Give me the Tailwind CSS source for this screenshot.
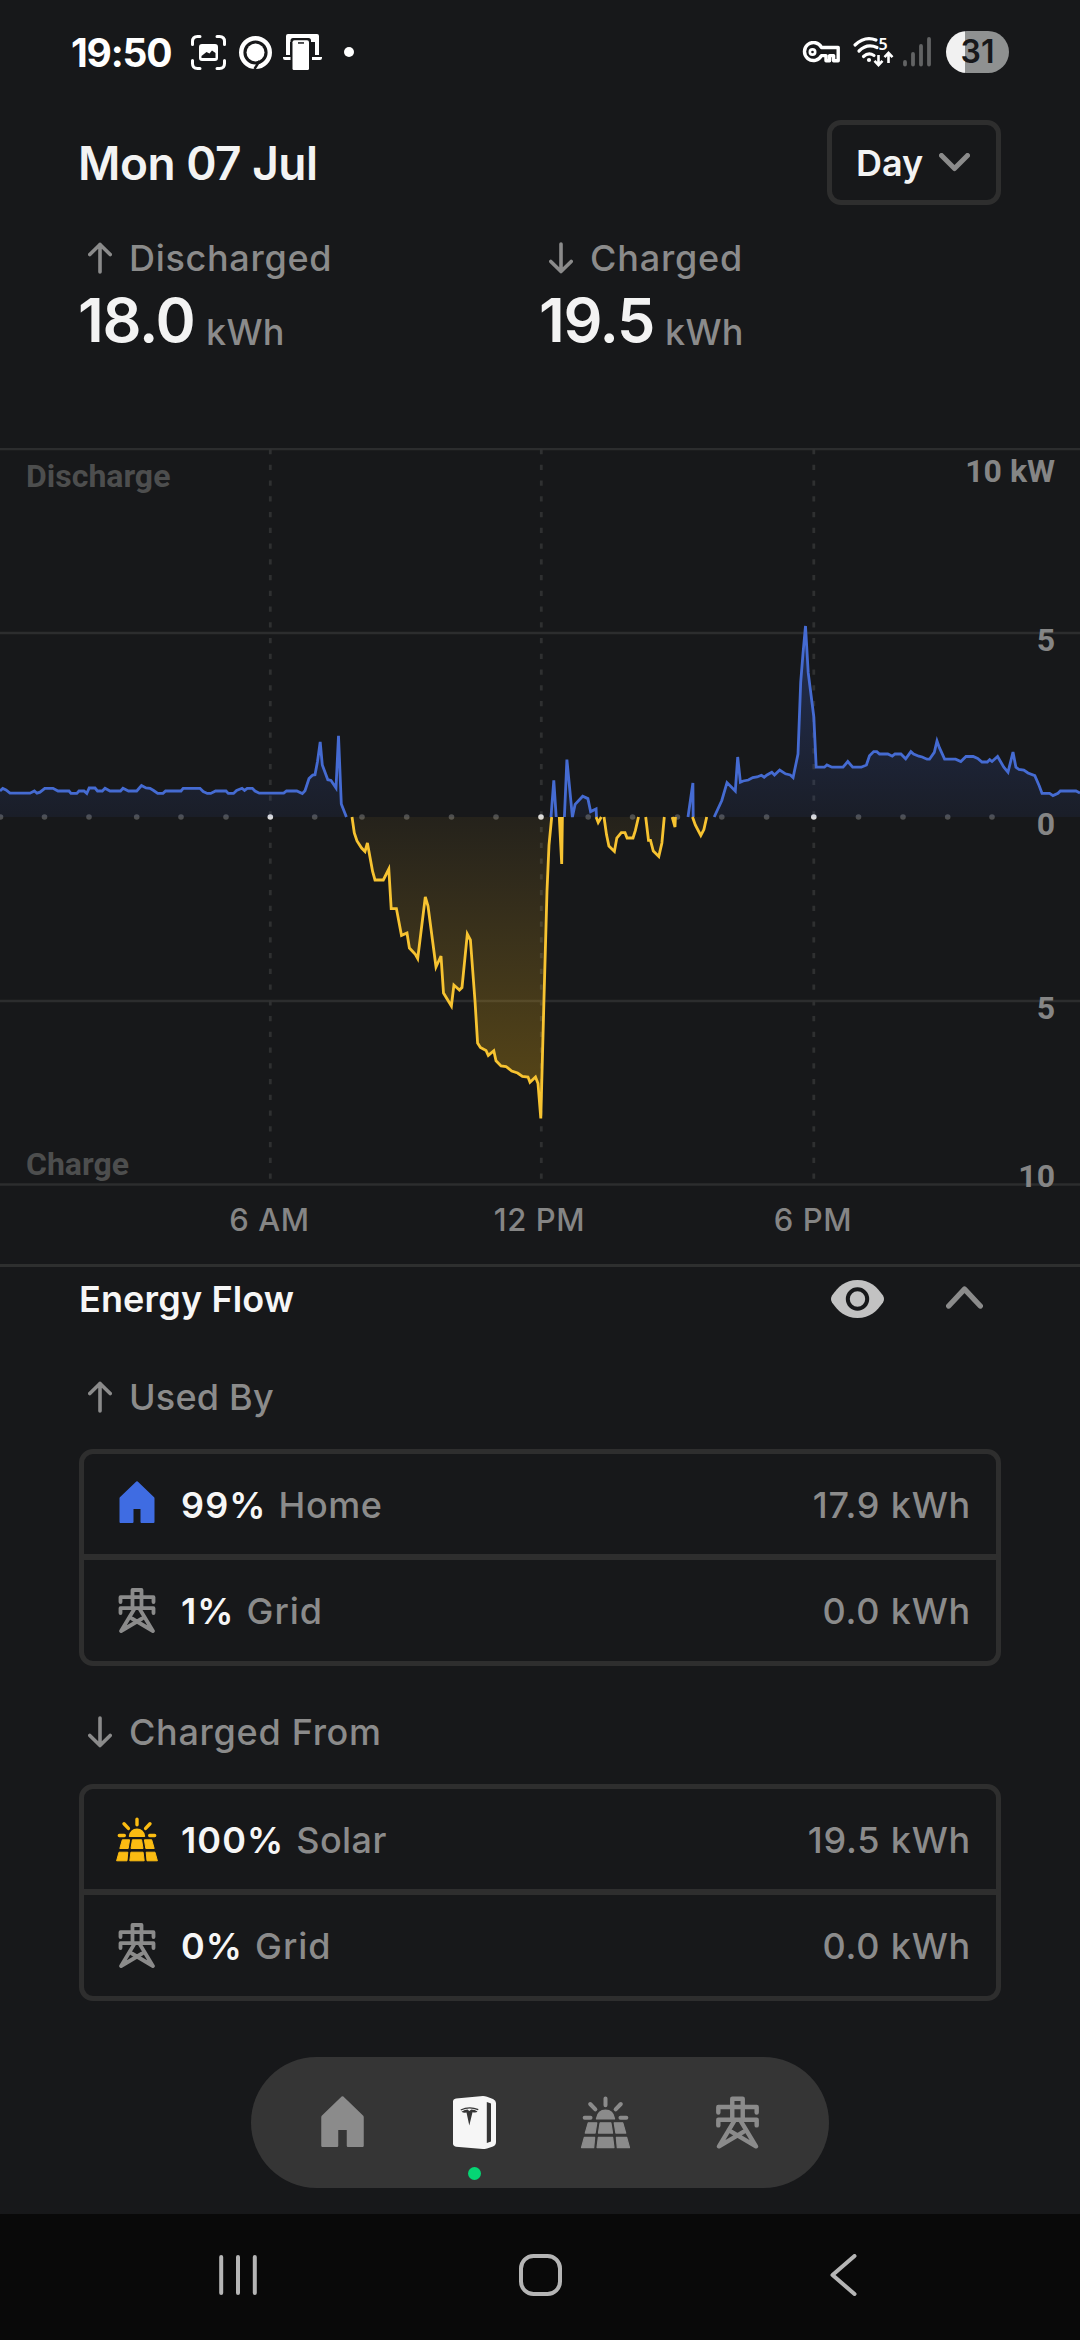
<!DOCTYPE html>
<html lang="en">

<head>
  <meta charset="UTF-8">
  <meta name="viewport" content="width=device-width, initial-scale=1.0">
  <title>Energy - Powerwall</title>
  <script src="https://cdn.jsdelivr.net/npm/@tailwindcss/browser@4"></script>
</head>

<body class="bg-[#17181a]">
  <!-- Shared icons -->
  <svg class="hidden">
    <symbol id="icon-home" viewBox="0 0 35 42">
      <path fill="currentColor" d="M16.8 .5Q17.5 0 18.2 .5L34.6 16.3Q35 16.8 35 17.5V41Q35 42 34 42H22Q21 42 21 41V28H14V41Q14 42 13 42H1Q0 42 0 41V17.5Q0 16.8 .4 16.3Z" />
    </symbol>
    <symbol id="icon-grid" viewBox="0 0 37 45">
      <g fill="none" stroke="currentColor" stroke-width="3.8" stroke-linecap="round" stroke-linejoin="round">
        <path d="M14 20V2H23V20M2 14V9.2H35V14M2 25V20.2H35V25" />
        <path d="M15.5 21.5L2.6 43L23.6 30.5M21.5 21.5L34.4 43L13.4 30.5" />
      </g>
    </symbol>
    <symbol id="icon-solar" viewBox="0 0 42 45">
      <path stroke="currentColor" stroke-width="3.4" stroke-linecap="round" d="M21 2.2V7.8M8 6.8L12.4 11.4M34 6.8L29.6 11.4M3.3 18.5H8.3M33.7 18.5H38.7" />
      <path fill="currentColor" d="M13.7 20Q12.6 20 12.8 19Q14.2 11.5 21 11.5T29.2 19Q29.4 20 28.3 20Z" />
      <path fill="currentColor" stroke="currentColor" stroke-linejoin="round" d="M6.3 22.8H13.6L12.2 31.5H3.8ZM16.4 22.8H25.6L27 31.5H15ZM28.4 22.8H35.7L38.2 31.5H29.8ZM3 35.2H11.8L11 43.8H.6ZM14.9 35.2H27.1L28.2 43.8H13.8ZM30.2 35.2H39L41.4 43.8H31Z" />
    </symbol>
    <symbol id="icon-arrow-up" viewBox="0 0 24 32">
      <path fill="none" stroke="currentColor" stroke-width="3.6" stroke-linecap="round" stroke-linejoin="round" d="M12 30V2.4M1.8 12.6L12 2.4L22.2 12.6" />
    </symbol>
    <symbol id="icon-arrow-down" viewBox="0 0 24 32">
      <path fill="none" stroke="currentColor" stroke-width="3.6" stroke-linecap="round" stroke-linejoin="round" d="M12 2V29.6M1.8 19.4L12 29.6L22.2 19.4" />
    </symbol>
  </svg>

  <div class="w-[1080px] h-[2340px] flex flex-col overflow-hidden text-[#8b8b8b] text-[36px] leading-none font-[550] font-['Inter','Noto_Sans',sans-serif]">

    <!-- Status bar -->
    <div class="h-[104px] shrink-0 flex items-center pl-[71px] pr-[71px] text-white">
      <span class="w-[120px] text-[39px] font-bold tracking-[-1.2px]">19:50</span>
      <svg class="w-[35px] h-[35px]" viewBox="0 0 35 35">
        <path fill="none" stroke="currentColor" stroke-width="3" stroke-linecap="round" d="M1.5 9.5V6.5Q1.5 1.5 6.5 1.5H9M26 1.5H28.5Q33.5 1.5 33.5 6.5V9.5M33.5 25.5V28.5Q33.5 33.5 28.5 33.5H26M9 33.5H6.5Q1.5 33.5 1.5 28.5V25.5" />
        <path fill="currentColor" fill-rule="evenodd" d="M11 9H24Q27 9 27 12V23Q27 26 24 26H11Q8 26 8 23V12Q8 9 11 9ZM10.5 23H24.5V18L21 15.5L18.5 18.5L15.5 17L10.5 21Z" />
      </svg>
      <svg class="w-[33px] h-[33px] ml-[13px]" viewBox="0 0 33 33">
        <circle cx="16.5" cy="16.5" r="14.3" fill="none" stroke="currentColor" stroke-width="4.4" />
        <circle cx="16.5" cy="16.5" r="9" fill="currentColor" />
        <path fill="none" stroke="#17181a" stroke-width="2.4" d="M20.5 25L15.5 33" />
      </svg>
      <svg class="w-[39px] h-[36px] ml-[11px]" viewBox="0 0 39 36">
        <path fill="currentColor" d="M5 0H34Q36 0 36 2V21H32V5H7V21H3V2Q3 0 5 0ZM0 23H8V26H2Q0 26 0 24ZM29 23H39V24Q39 26 37 26H29ZM7 4H32V8H7Z" />
        <rect x="7.5" y="4" width="20.5" height="34" rx="2.5" fill="#17181a" />
        <rect x="9.5" y="6.2" width="16.5" height="30" rx="2" fill="currentColor" />
        <path fill="#17181a" d="M15 8.2H21V9.7H15Z" />
      </svg>
      <span class="w-[10px] h-[10px] ml-[22px] rounded-full bg-white"></span>

      <div class="ml-auto flex items-center">
        <svg class="w-[38px] h-[23px]" viewBox="0 0 38 23">
          <path fill="none" stroke="currentColor" stroke-width="3.4" stroke-linejoin="round" d="M19.5 6.5H36.2V19.8H31.6V14.6H27.6V19.8H24V14.6H19.5A9 9 0 1 1 19.5 6.5Z" />
          <circle cx="10.5" cy="11" r="4" fill="currentColor" />
          <circle cx="10.5" cy="11" r="1.3" fill="#17181a" />
        </svg>
        <svg class="w-[41px] h-[30px] ml-[13px] overflow-visible" viewBox="0 0 41 30">
          <path fill="none" stroke="currentColor" stroke-width="3.2" stroke-linecap="round" d="M2 8Q12 -1.5 23 3M6 14Q14 6 24 10.5M10.5 19.5Q15.5 15 21 18.5" />
          <circle cx="16" cy="23" r="2.1" fill="currentColor" />
          <path fill="none" stroke="currentColor" stroke-width="2.6" d="M25.5 18V28M21.5 23.800L25.5 28L29.5 23.800M35.5 26V16M31.5 20.2L35.5 16L39.5 20.2" />
          <text x="25.5" y="13" font-family="Noto Sans" font-weight="600" font-size="16" fill="currentColor">5</text>
        </svg>
        <svg class="w-[28px] h-[30px] ml-[9px]" viewBox="0 0 28 30">
          <path stroke="#626364" stroke-width="3.8" stroke-linecap="round" d="M2 25V27.5M10 17V27.5M18 9V27.5M26 2V27.5" />
        </svg>
        <div class="w-[63px] h-[42px] ml-[15px] rounded-full flex items-center justify-center text-[32px] font-semibold text-[#17181a] bg-linear-to-r from-[#f1f1f1] from-30% to-[#8f9191] to-30%">31</div>
      </div>
    </div>

    <!-- Date and range picker -->
    <div class="h-[117px] shrink-0 flex items-center justify-between pl-[78px] pr-[79px] text-[#f3f3f3]">
      <h1 class="text-[46px] font-semibold tracking-[-0.5px]">Mon 07 Jul</h1>
      <button class="w-[174px] h-[85px] flex items-center pl-[24px] border-5 border-[#2e2e2e] rounded-[14px]">
        <span class="w-[83px] text-left font-semibold">Day</span>
        <svg class="w-[31px] h-[19px]" viewBox="0 0 31 19">
          <path fill="none" stroke="#8b8b8b" stroke-width="5" stroke-linecap="round" stroke-linejoin="round" d="M2.5 2.5L15.5 15.5L28.5 2.5" />
        </svg>
      </button>
    </div>

    <!-- Totals -->
    <div class="h-[227px] shrink-0 grid grid-cols-[461px_1fr] pl-[78px] pt-[19px]">
      <div>
        <div class="flex items-center pl-[10px] tracking-[0.7px]">
          <svg class="w-[24px] h-[32px] mr-[17px]"><use href="#icon-arrow-up" /></svg>
          Discharged
        </div>
        <div class="flex items-end mt-[14px]">
          <span class="w-[128px] text-[61px] font-semibold tracking-[-1.3px] text-[#f3f3f3]">18.0</span>
          <span class="pb-[1px] tracking-[0.3px]">kWh</span>
        </div>
      </div>
      <div>
        <div class="flex items-center pl-[10px] tracking-[0.8px]">
          <svg class="w-[24px] h-[32px] mr-[17px]"><use href="#icon-arrow-down" /></svg>
          Charged
        </div>
        <div class="flex items-end mt-[14px]">
          <span class="w-[126px] text-[61px] font-semibold tracking-[-1.3px] text-[#f3f3f3]">19.5</span>
          <span class="pb-[1px] tracking-[0.3px]">kWh</span>
        </div>
      </div>
    </div>

    <!-- Chart: y = 0 is the zero line, 36.8 units per kW -->
    <svg class="w-[1080px] h-[816px] shrink-0" viewBox="0 -369 1080 816">
      <defs>
        <linearGradient id="fade-blue" gradientUnits="userSpaceOnUse" x1="0" y1="0" x2="0" y2="-368">
          <stop offset="0" stop-color="#4169e1" stop-opacity=".07" />
          <stop offset="1" stop-color="#4169e1" stop-opacity=".5" />
        </linearGradient>
        <linearGradient id="fade-yellow" gradientUnits="userSpaceOnUse" x1="0" y1="0" x2="0" y2="368">
          <stop offset="0" stop-color="#fbc02d" stop-opacity=".06" />
          <stop offset="1" stop-color="#fbb903" stop-opacity=".35" />
        </linearGradient>
      </defs>

      <!-- Grid -->
      <path stroke="#2c2d2e" stroke-width="2.6" d="M0 -368H1080M0 -184H1080M0 184H1080M0 367.5H1080" />
      <path stroke="#2f3031" stroke-width="2.8" stroke-dasharray="5.25 10.5" d="M270.3 -368V366M541.3 -368V366M813.8 -368V366" />

      <g id="dots"></g>
      <g id="series"></g>

      <g font-family="Roboto" font-weight="700" font-size="32">
        <g fill="#4d4e4e">
          <text x="26" y="-330">Discharge</text>
          <text x="26" y="358">Charge</text>
        </g>
        <g fill="#858585" text-anchor="end">
          <text x="1055" y="-335">10 kW</text>
          <text x="1055" y="-166.5">5</text>
          <text x="1055" y="17.5">0</text>
          <text x="1055" y="202">5</text>
          <text x="1055" y="369.500">10</text>
        </g>
      </g>
      <g font-family="Inter" font-weight="550" font-size="31" letter-spacing=".6" fill="#858585" text-anchor="middle">
        <text x="269.5" y="413.5">6 AM</text>
        <text x="539.5" y="413.5">12 PM</text>
        <text x="813" y="413.5">6 PM</text>
      </g>
    </svg>

    <!-- Energy flow -->
    <div class="h-[950px] shrink-0 border-t-3 border-[#2e2f2f] px-[79px]">
      <div class="h-[64px] flex items-center text-[#f6f6f6]">
        <h2 class="font-semibold tracking-[0.15px]">Energy Flow</h2>
        <svg class="w-[53px] h-[38px] ml-auto" viewBox="0 0 53 38">
          <path fill="#c2c2c2" d="M26.5 0C39 0 46 7 52 15.5Q54 19 52 22.5C46 31 39 38 26.5 38S7 31 1 22.5Q-1 19 1 15.5C7 7 14 0 26.5 0Z" />
          <circle cx="26.5" cy="19" r="9.7" fill="none" stroke="#17181a" stroke-width="4" />
        </svg>
        <svg class="w-[37px] h-[23px] ml-[62px] mr-[18px] mb-[4px]" viewBox="0 0 37 23">
          <path fill="none" stroke="#8b8b8b" stroke-width="5.4" stroke-linecap="round" stroke-linejoin="round" d="M2.7 20L18.5 3.2L34.3 20" />
        </svg>
      </div>

      <div class="flex items-center mt-[48px] h-[36px] pl-[9px] tracking-[0.2px]">
        <svg class="w-[24px] h-[32px] mr-[17px]"><use href="#icon-arrow-up" /></svg>
        Used By
      </div>
      <div class="h-[217px] mt-[34px] border-5 border-[#2e2e2e] rounded-[14px] divide-y-6 divide-[#2e2e2e]">
        <div class="h-[106px] flex items-center pl-[32px] pr-[25px] pt-[1px]">
          <svg class="w-[42px] h-[42px] mr-[23px] mb-[5px] text-[#3f6ce2]"><use href="#icon-home" /></svg>
          <span class="font-semibold tracking-[1.1px] text-[#f6f6f6] mr-[12px]">99%</span>
          <span class="tracking-[0.6px]">Home</span>
          <span class="ml-auto tracking-[0.8px]">17.9 kWh</span>
        </div>
        <div class="h-[101px] flex items-center pl-[32px] pr-[25px]">
          <svg class="w-[42px] h-[45px] mr-[23px]"><use href="#icon-grid" /></svg>
          <span class="font-semibold tracking-[1.1px] text-[#f6f6f6] mr-[12px]">1%</span>
          <span class="tracking-[0.9px]">Grid</span>
          <span class="ml-auto tracking-[0.8px]">0.0 kWh</span>
        </div>
      </div>

      <div class="flex items-center mt-[48px] h-[36px] pl-[9px] tracking-[0.7px]">
        <svg class="w-[24px] h-[32px] mr-[17px]"><use href="#icon-arrow-down" /></svg>
        Charged From
      </div>
      <div class="h-[217px] mt-[34px] border-5 border-[#2e2e2e] rounded-[14px] divide-y-6 divide-[#2e2e2e]">
        <div class="h-[106px] flex items-center pl-[32px] pr-[25px] pt-[1px]">
          <svg class="w-[42px] h-[45px] mr-[23px] text-[#fbbc12]"><use href="#icon-solar" /></svg>
          <span class="font-semibold tracking-[1.1px] text-[#f6f6f6] mr-[12px]">100%</span>
          <span class="tracking-[0.4px]">Solar</span>
          <span class="ml-auto tracking-[0.8px]">19.5 kWh</span>
        </div>
        <div class="h-[101px] flex items-center pl-[32px] pr-[25px]">
          <svg class="w-[42px] h-[45px] mr-[23px]"><use href="#icon-grid" /></svg>
          <span class="font-semibold tracking-[1.1px] text-[#f6f6f6] mr-[12px]">0%</span>
          <span class="tracking-[0.9px]">Grid</span>
          <span class="ml-auto tracking-[0.8px]">0.0 kWh</span>
        </div>
      </div>

      <!-- Tab bar -->
      <div class="w-[578px] h-[131px] mt-[56px] mx-auto rounded-full bg-[#353535] grid grid-cols-4 items-start px-[26px] pt-[39px]">
        <svg class="w-[43px] h-[51px] mx-auto"><use href="#icon-home" /></svg>
        <div class="flex flex-col items-center gap-[18px]">
          <svg class="w-[43px] h-[53px]" viewBox="0 0 43 53">
            <path fill="#f6f6f6" d="M3 2.5L30 0Q32 0 34 .8L40 3Q43 4.5 43 7V46Q43 49 40 50.5L34 52.5Q32 53.2 30 53L3 50.8Q0 50 0 47.5V5.5Q0 3 3 2.5Z" />
            <path fill="#353535" d="M33.8 6L38 7.5V45.5L33.8 47Z" />
            <path fill="#353535" d="M7.5 13.5Q16 9.3 25.5 13L25 14.2Q16 10.8 8 14.6ZM8.5 15.8Q12 13.5 14.5 13.5L16.3 15L18.3 13.5Q22 13.5 24.5 15.5Q23.5 17 19.5 16.3L16.3 29.5L13.5 16.5Q10.5 17 8.5 15.8Z" />
          </svg>
          <span class="w-[13px] h-[13px] rounded-full bg-[#05d674]"></span>
        </div>
        <svg class="w-[51px] h-[53px] mx-auto"><use href="#icon-solar" /></svg>
        <svg class="w-[43px] h-[53px] mx-auto"><use href="#icon-grid" /></svg>
      </div>
    </div>

    <!-- System navigation -->
    <div class="grow bg-[#090909] flex items-center justify-between pl-[219px] pr-[223px] pb-[4px]">
      <svg class="w-[38px] h-[42px]" viewBox="0 0 38 42">
        <path stroke="#b5b5b5" stroke-width="4" stroke-linecap="round" d="M2.2 3V39M19 3V39M35.8 3V39" />
      </svg>
      <svg class="w-[43px] h-[42px] mr-[7px]" viewBox="0 0 43 42">
        <rect x="2" y="2" width="39" height="38" rx="12.5" fill="none" stroke="#b5b5b5" stroke-width="4" />
      </svg>
      <svg class="w-[27px] h-[42px]" viewBox="0 0 27 42">
        <path fill="none" stroke="#b5b5b5" stroke-width="4" stroke-linecap="round" stroke-linejoin="round" d="M24.5 2L2.5 21L24.5 40" />
      </svg>
    </div>
  </div>

  <script>
    const BLUE = '#456bd2';
    const YELLOW = '#f7c331';

    // Each run is a list of "x,y" points that starts and ends at the zero line
    const runs = [
      { color: BLUE, fill: 'url(#fade-blue)', points: '0,-26 2.8,-28.5 6,-27 10,-23.8 30,-23.8 34.4,-26 37,-23.8 40,-24.8 44.8,-28.7 53,-28.7 58,-26 69,-26 71,-23.6 76.8,-23.6 79,-26 84,-26 86.8,-23.6 89.2,-29 95,-29 97.5,-26 102.3,-26 105,-28.7 110,-26 120.5,-26 123,-28.7 128.5,-26 136.7,-26 141.5,-31.4 146,-29 150,-28.7 153.6,-26.5 157.7,-23.6 163,-23.6 165.6,-26 181,-26 183.2,-28.7 200,-28.7 203.2,-25.5 207.3,-23.6 210.7,-23.6 215.6,-26 226,-26 228.3,-23.6 233.5,-23.6 236.6,-26.6 242,-28.7 244.5,-26.6 247.2,-28.7 252.4,-28.7 255,-26 259.3,-23.8 283.7,-23.8 286.5,-26 296.8,-26 302.3,-23.4 305,-26.3 309,-38.4 312.7,-42 315,-42.3 317.5,-55.5 320.2,-75 322.3,-52 327.8,-37.3 331,-36.6 336,-29 338.5,-81.3 341.3,-13 346.4,0' },
      { color: YELLOW, fill: 'url(#fade-yellow)', points: '352,0 354.3,16 357,24 361.6,31 365,34.5 367.4,26 372.6,54.5 375,63 383.3,63 388.8,52 391.2,91.6 396.4,91.6 401.5,118.4 407,116 409.4,131 415.3,137.3 417.7,141.6 425.3,80 428,89 436,150 441,139 443.5,176 451.4,189 453.9,168 459.4,173 462,170.5 467.3,117 470.4,123 475,184 477.6,226 480.4,230.5 486,233.4 488.3,238.4 493.8,233.8 496,243.8 501,249 506,249.5 511.7,254 517.6,256 522.4,259.5 528,260 530,265.2 535.5,260 538,266.6 540.8,301.5 544,181 547,74 549,28 551.7,0' },
      { color: BLUE, fill: 'url(#fade-blue)', points: '551,0 553.8,-36.7 556.2,0' },
      { color: YELLOW, fill: YELLOW, points: '559.3,0 561.7,47 562.4,0' },
      { color: BLUE, fill: 'url(#fade-blue)', points: '564.4,0 566.9,-57.4 572.4,0 575.1,-12.6 582.7,-20.7 587.9,-18.4 590.6,-5.4 596.1,-8 596.5,0' },
      { color: YELLOW, fill: 'url(#fade-yellow)', points: '596.1,0 598.2,5.5 601.3,0' },
      { color: YELLOW, fill: 'url(#fade-yellow)', points: '604,0 606.5,17.6 608.9,29 614.4,34.4 616.8,21 621.3,15.7 625,15.7 627.1,21 633,21 635.4,13.4 638.5,0' },
      { color: YELLOW, fill: 'url(#fade-yellow)', points: '645.7,0 648.5,23.3 650.5,23.3 653.3,34 658.8,39.4 661.9,26 664.3,0' },
      { color: YELLOW, fill: YELLOW, points: '672.2,0 675,10 675.4,0' },
      { color: BLUE, fill: 'url(#fade-blue)', points: '688,0 692.9,-34 693.2,0' },
      { color: YELLOW, fill: 'url(#fade-yellow)', points: '692.5,0 695.3,8 700.8,18.4 703.9,12.6 706.7,0' },
      { color: BLUE, fill: 'url(#fade-blue)', points: '714.2,0 721.8,-16.5 727,-34.4 735.3,-26 737.7,-60 740.4,-34.8 743.2,-36 748.3,-37 752.8,-39.4 757,-40 761.4,-41.7 764.2,-39.8 767,-42 771.8,-44.8 774.5,-42 779.7,-47 785.5,-43.2 790.3,-42 793.1,-39.4 798,-63 800.7,-134.7 803,-163.5 805.5,-191 808.2,-144.3 813.8,-100.3 816.2,-49.8 824.4,-49.8 826.9,-52 832,-49.8 843,-49.8 847.8,-55.5 852.7,-49.8 861.3,-49.8 866.4,-52 869.5,-61.2 873.7,-65.4 876.8,-65.4 879.5,-63 887.8,-63 892.3,-60.8 895,-63 900.9,-63 905.7,-58.2 910.9,-65.4 913.6,-63 918.8,-60.8 922.2,-60 927,-57.8 929.5,-57.8 934.3,-64.7 937,-76 939.4,-69.3 944.6,-57.8 955.6,-57.8 960.8,-55.5 966,-60.5 973.2,-60.5 977.7,-58.5 982,-55 987.3,-55 989.7,-57.4 992,-55.5 997.6,-60.5 1003.8,-49.8 1008,-44.8 1013,-65 1015.9,-49.8 1019,-47.5 1023.8,-47 1028,-44 1034.8,-41.3 1039.3,-31 1042,-23.7 1049.6,-23.7 1053,-21.4 1058,-23.7 1060.3,-26 1076,-26 1080,-24' }
    ];

    document.getElementById('series').innerHTML = runs.map(({ color, fill, points }) => {
      const first = points.split(',')[0];
      const last = points.split(' ').pop().split(',')[0];
      return `<polygon fill="${fill}" points="${first},0 ${points} ${last},0" />
        <polyline fill="none" stroke="${color}" stroke-width="2.8" points="${points}" />`;
    }).join('');

    // One dot per hour, brighter at each labelled hour
    const hours = [0.5, 44.5, 89, 136.7, 181, 226, 270.3, 314.7, 362, 406.7, 451.5, 496, 541, 588.2, 632.6, 677.4, 721.8, 766.6, 813.8, 858.5, 903, 947.7, 992];
    document.getElementById('dots').innerHTML = hours.map((x, i) =>
      `<circle cx="${x}" cy="0" r="2.8" fill="${i && i % 6 === 0 ? '#dcdcdc' : '#4d4e4f'}" />`
    ).join('');
  </script>
</body>

</html>
